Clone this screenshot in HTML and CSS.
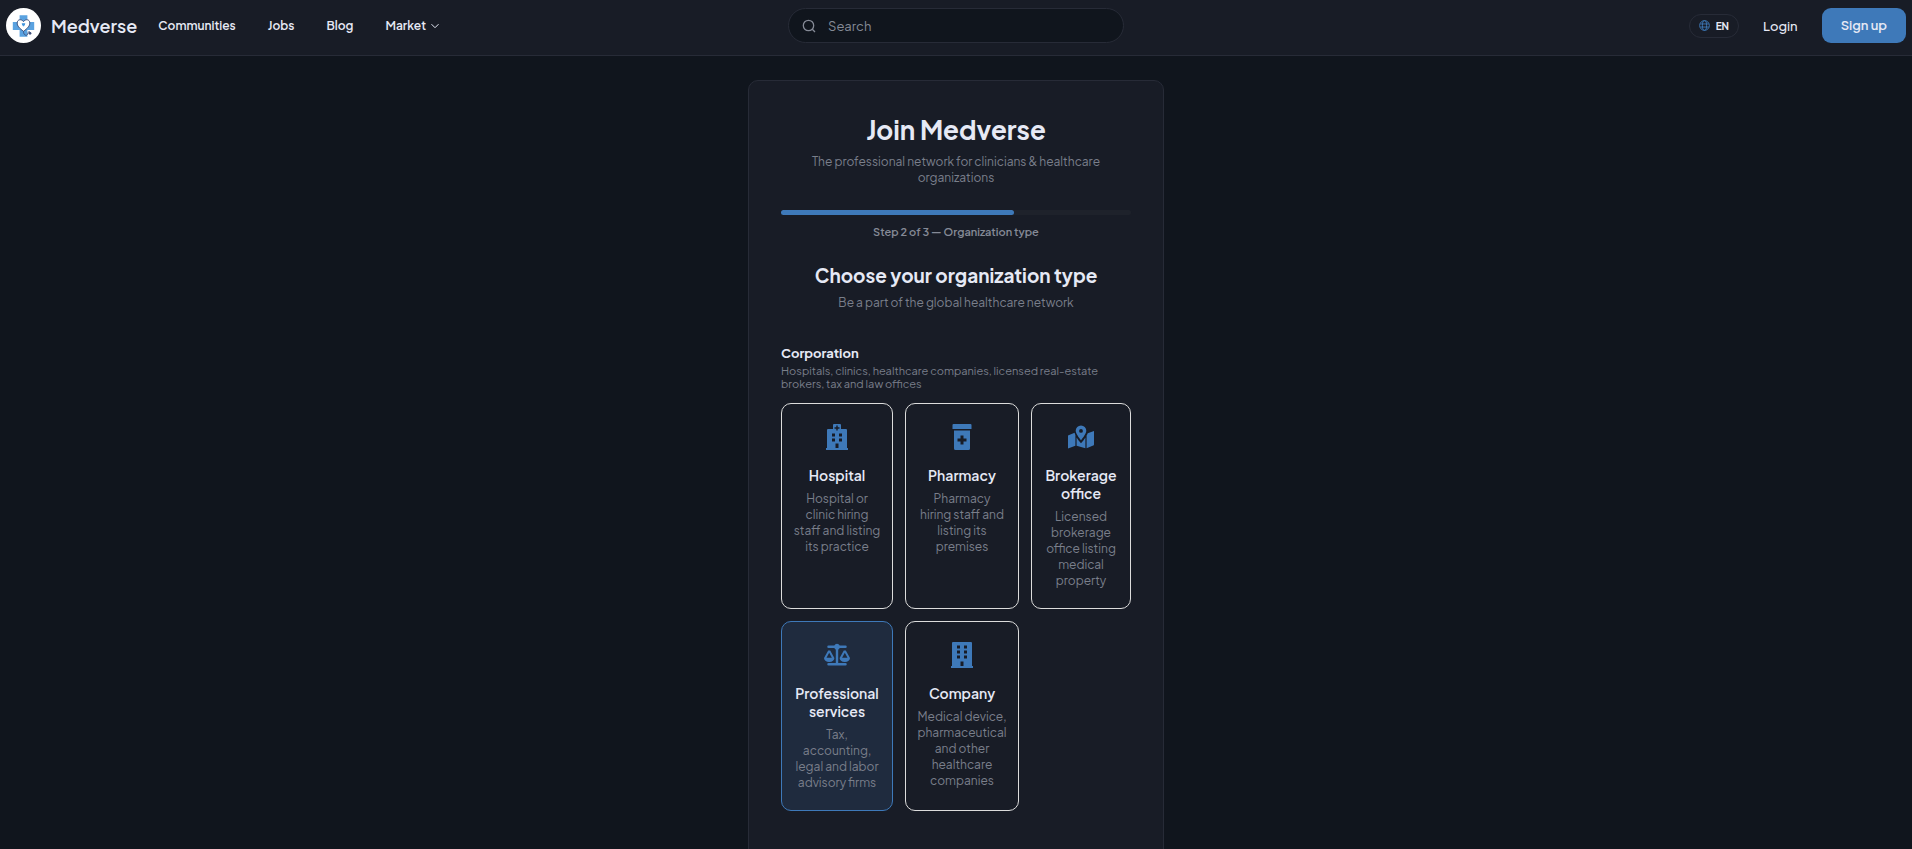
FILE: index.html
```html
<!DOCTYPE html>
<html lang="en">
<head>
  <meta charset="UTF-8" />
  <meta name="viewport" content="width=device-width, initial-scale=1.0"/>
  <title>Join Medverse</title>
  <link rel="stylesheet" href="styles.css">
</head>
<body>
  <header class="navbar">
    <div class="nav-left">
      <a class="brand" href="#">
        <svg class="brand-logo" viewBox="0 0 36 36" aria-hidden="true">
          <circle cx="18" cy="18" r="18" fill="#fff"/>
          <path d="M14 7.500h8v7h7v8h-7v7h-8v-7H7v-8h7z" fill="#5aa2e0"/>
          <path d="M18 24c-4-3-6.500-5.500-6.500-8.500 0-4 4.500-4.500 6.500-1.500 2-3 6.500-2.500 6.500 1.500 0 3-2.500 5.500-6.500 8.500z" fill="#fff" stroke="#3d4f7c" stroke-width="1"/>
          <path d="M18 24c0 5 4.500 5 4.500 2 0-2 2.500-2 2.500-.5" fill="none" stroke="#3d4f7c" stroke-width="1"/>
          <circle cx="24.700" cy="26" r="1.400" fill="#3d4f7c"/>
          <path d="M16.500 16.200h3l-1.500 2.500z" fill="#4596dc" stroke="#4596dc"/>
        </svg>
        <span>Medverse</span>
      </a>
      <nav class="nav-links">
        <a href="#">Communities</a>
        <a href="#">Jobs</a>
        <a href="#">Blog</a>
        <a href="#" class="has-menu">Market
          <svg class="chevron" viewBox="0 0 8 8" aria-hidden="true"><path d="M.5 2.200l3.500 3.500 3.500-3.500"/></svg>
        </a>
      </nav>
    </div>

    <form class="search" role="search">
      <svg class="search-icon" viewBox="0 0 14 14" aria-hidden="true">
        <circle cx="6.500" cy="6.500" r="5.200"/><path d="M10.300 10.300l2.700 2.700"/>
      </svg>
      <input type="search" placeholder="Search" aria-label="Search">
    </form>

    <div class="nav-right">
      <button class="lang-button" type="button">
        <svg class="globe" viewBox="0 0 12 12" aria-hidden="true">
          <circle cx="6" cy="6" r="5.300"/><ellipse cx="6" cy="6" rx="2.300" ry="5.300"/><path d="M1.300 4.300h9.400M1.300 7.700h9.400"/>
        </svg>
        EN
      </button>
      <a class="login" href="#">Login</a>
      <a class="signup" href="#">Sign up</a>
    </div>
  </header>

  <main class="join-card">
    <h1>Join Medverse</h1>
    <p class="tagline">The professional network for clinicians &amp; healthcare organizations</p>

    <div class="progress"><div class="progress-bar"></div></div>
    <p class="step">Step 2 of 3 — Organization type</p>

    <h2>Choose your organization type</h2>
    <p class="subtitle">Be a part of the global healthcare network</p>

    <h3>Corporation</h3>
    <p class="hint">Hospitals, clinics, healthcare companies, licensed real-estate brokers, tax and law offices</p>

    <div class="types">
      <button class="type" type="button">
        <svg class="type-icon" viewBox="0 0 26 26" aria-hidden="true">
          <path fill-rule="evenodd" d="M10 0h6a1 1 0 0 1 1 1v4h5a1 1 0 0 1 1 1v18h1v2H2v-2h1V6a1 1 0 0 1 1-1h5V1a1 1 0 0 1 1-1zM12.300 1.500v1.800h-1.800v1.400h1.800v1.800h1.400V4.700h1.800V3.300h-1.800V1.500zM8 9.500v3h3v-3zM15 9.500v3h3v-3zM8 14.500v3h3v-3zM15 14.500v3h3v-3zM11.500 19.500V24h3v-4.500z"/>
        </svg>
        <span class="type-name">Hospital</span>
        <span class="type-text">Hospital or<br>clinic hiring<br>staff and listing<br>its practice</span>
      </button>
      <button class="type" type="button">
        <svg class="type-icon" viewBox="0 0 26 26" aria-hidden="true">
          <path fill-rule="evenodd" d="M4.500 0h17a1 1 0 0 1 1 1v4h-19V1a1 1 0 0 1 1-1zM5 6.500h16V24.500a1.500 1.500 0 0 1-1.500 1.500h-13A1.500 1.500 0 0 1 5 24.500zM11.500 11.500v3h-3v3h3v3h3v-3h3v-3h-3v-3z"/>
        </svg>
        <span class="type-name">Pharmacy</span>
        <span class="type-text">Pharmacy<br>hiring staff and<br>listing its<br>premises</span>
      </button>
      <button class="type" type="button">
        <svg class="type-icon" viewBox="0 0 26 26" aria-hidden="true">
          <path fill-rule="evenodd" d="M13 1.500a5.300 5.300 0 0 1 5.300 5.300c0 2.800-3.300 7-5.300 9.500-2-2.500-5.300-6.700-5.300-9.500A5.300 5.300 0 0 1 13 1.500zM13 5a1.900 1.900 0 1 0 0 3.800A1.900 1.900 0 0 0 13 5z"/>
          <path d="M0 11.500l6.600-2.700c.2.900.4 1.600.8 2.300V21.700L0 24.500zM8.600 13.500c1.200 2 2.700 4 4.400 5.700 1.700-1.700 3.200-3.700 4.400-5.700V24.300l-8.800-2.600zM18.600 11.600c.8-1.300 1-2 1.100-2.300L26 7v13.500c0 .5-.3.900-.8 1.100l-6.600 2.600z"/>
        </svg>
        <span class="type-name">Brokerage office</span>
        <span class="type-text">Licensed<br>brokerage<br>office listing<br>medical<br>property</span>
      </button>
      <button class="type selected" type="button" aria-pressed="true">
        <svg class="type-icon" viewBox="0 0 26 26" aria-hidden="true">
          <path d="M4.500 3.500h5.800a3 3 0 0 1 5.400 0h5.800a1 1 0 0 1 0 2.500h-5.700L14.200 7.700V21h7.300a1 1 0 0 1 0 2.500h-17a1 1 0 0 1 0-2.500h7.300V7.700L10.200 6H4.500a1 1 0 0 1 0-2.500z"/>
          <path fill-rule="evenodd" d="M4.200 8.500h2L10.400 16c0 2.200-2 4-5.200 4S0 18.200 0 16zM5.200 10.700L2.500 15.700h5.400zM19.800 8.500h2L26 16c0 2.200-2 4-5.200 4s-5.200-1.800-5.200-4zM20.800 10.700l-2.700 5h5.400z"/>
        </svg>
        <span class="type-name">Professional services</span>
        <span class="type-text">Tax,<br>accounting,<br>legal and labor<br>advisory firms</span>
      </button>
      <button class="type" type="button">
        <svg class="type-icon" viewBox="0 0 26 26" aria-hidden="true">
          <path fill-rule="evenodd" d="M4 0h18a1 1 0 0 1 1 1v23h1v2H2v-2h1V1a1 1 0 0 1 1-1zM8 3.500v3h3v-3zM15 3.500v3h3v-3zM8 8.500v3h3v-3zM15 8.500v3h3v-3zM8 13.500v3h3v-3zM15 13.500v3h3v-3zM11.500 19.500V24h3v-4.500z"/>
        </svg>
        <span class="type-name">Company</span>
        <span class="type-text">Medical device,<br>pharmaceutical<br>and other<br>healthcare<br>companies</span>
      </button>
    </div>
  </main>
</body>
</html>
```
FILE: styles.css
```css
:root {
  --bg-color: #10151d;
  --panel-bg: #181c26;
  --border-color: #272b37;
  --text-color: #e6e9f5;
  --muted-color: #7a7f8b;
  --primary-color: #3e79b9;
}

* {
  box-sizing: border-box;
}

body {
  margin: 0;
  font-family: 'Plus Jakarta Sans', Inter, sans-serif;
  background-color: var(--bg-color);
  color: var(--text-color);
}

a {
  color: inherit;
  text-decoration: none;
}

button {
  font-family: inherit;
  color: inherit;
  cursor: pointer;
}

.navbar {
  display: grid;
  grid-template-columns: 1fr 336px 1fr;
  align-items: center;
  height: 56px;
  padding: 0 6px 4px;
  background-color: var(--panel-bg);
  border-bottom: 1px solid var(--border-color);
}

.nav-left, .nav-right, .nav-links, .brand {
  display: flex;
  align-items: center;
}

.nav-left {
  gap: 21px;
}

.brand {
  gap: 10px;
  font-size: 18px;
  font-weight: 600;
}

.brand-logo {
  width: 35px;
  height: 35px;
}

.nav-links {
  gap: 32px;
  font-size: 12px;
  font-weight: 600;
}

.has-menu {
  display: flex;
  align-items: center;
  gap: 5px;
}

.chevron {
  width: 8px;
  height: 8px;
  fill: none;
  stroke: currentColor;
}

.search {
  display: flex;
  align-items: center;
  gap: 12px;
  height: 35px;
  padding: 0 13px;
  background-color: var(--bg-color);
  border: 1px solid var(--border-color);
  border-radius: 18px;
}

.search-icon {
  width: 14px;
  height: 14px;
  fill: none;
  stroke: #858a96;
  stroke-width: 1.3;
}

.search input {
  flex: 1;
  min-width: 0;
  padding: 0;
  border: none;
  outline: none;
  background: none;
  font-family: inherit;
  font-size: 13px;
  color: var(--text-color);
}

.search input::placeholder {
  color: #858a96;
}

.nav-right {
  justify-content: flex-end;
  gap: 24px;
  font-size: 13px;
  font-weight: 500;
}

.lang-button {
  display: flex;
  align-items: center;
  gap: 6px;
  height: 24px;
  padding: 0 9px;
  background: none;
  border: 1px solid var(--border-color);
  border-radius: 12px;
  font-size: 10px;
  font-weight: 700;
}

.globe {
  width: 11px;
  height: 11px;
  fill: none;
  stroke: var(--primary-color);
}

.signup {
  padding: 0 19px;
  line-height: 35px;
  background-color: var(--primary-color);
  border-radius: 9px;
  font-weight: 600;
}

.join-card {
  max-width: 416px;
  margin: 24px auto;
  padding: 32px 32px 72px;
  background-color: var(--panel-bg);
  border: 1px solid var(--border-color);
  border-radius: 10px;
  text-align: center;
}

h1, h2, h3, p {
  margin: 0;
}

h1 {
  font-size: 26px;
  line-height: 34px;
  font-weight: 700;
}

.tagline, .subtitle {
  font-size: 12px;
  line-height: 16px;
  color: var(--muted-color);
}

.tagline {
  margin: 7px 16px 24px;
}

.progress {
  height: 5px;
  background-color: #1e222b;
  border-radius: 3px;
}

.progress-bar {
  width: 66.66%;
  height: 100%;
  background-color: var(--primary-color);
  border-radius: 3px;
}

.step {
  margin: 10px 0 23px;
  font-size: 11px;
  line-height: 14px;
  font-weight: 600;
  color: #858a96;
}

h2 {
  margin-bottom: 7px;
  font-size: 19px;
  line-height: 26px;
  font-weight: 700;
}

.subtitle {
  margin-bottom: 33px;
}

h3 {
  margin-bottom: 2px;
  font-size: 13px;
  line-height: 18px;
  font-weight: 700;
  text-align: left;
}

.hint {
  margin-bottom: 13px;
  font-size: 11px;
  line-height: 13px;
  color: var(--muted-color);
  text-align: left;
}

.types {
  display: grid;
  grid-template-columns: 112fr 114fr 100fr;
  gap: 12px;
}

.type {
  display: flex;
  flex-direction: column;
  align-items: center;
  min-width: 0;
  padding: 20px 8px 19px;
  background: none;
  border: 1px solid #dcdcdc;
  border-radius: 10px;
}

.type.selected {
  background-color: #1f2b3e;
  border-color: var(--primary-color);
}

.type-icon {
  width: 26px;
  height: 26px;
  margin-bottom: 16px;
  fill: var(--primary-color);
}

.type-name {
  margin-bottom: 7px;
  font-size: 14px;
  line-height: 18px;
  font-weight: 600;
}

.type-text {
  font-size: 12px;
  line-height: 16px;
  color: var(--muted-color);
  white-space: nowrap;
}
```
